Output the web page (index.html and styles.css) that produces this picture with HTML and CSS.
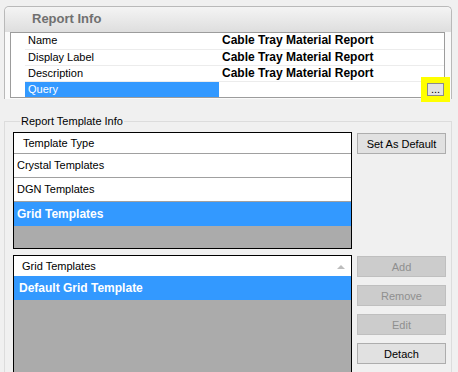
FILE: index.html
```html
<!DOCTYPE html>
<html lang="en">
<head>
    <meta charset="UTF-8">
    <title>Report Info</title>
    <link rel="stylesheet" href="styles.css">
</head>
<body>

    <div class="report-info">
        <div class="ri-head">Report Info</div>
        <div class="ri-body">
            <div class="prop-grid">
                <div class="prop-row">
                    <span class="gutter"></span>
                    <span class="prop-name">Name</span>
                    <span class="prop-value">Cable Tray Material Report</span>
                </div>
                <div class="prop-row">
                    <span class="gutter"></span>
                    <span class="prop-name">Display Label</span>
                    <span class="prop-value">Cable Tray Material Report</span>
                </div>
                <div class="prop-row">
                    <span class="gutter"></span>
                    <span class="prop-name">Description</span>
                    <span class="prop-value">Cable Tray Material Report</span>
                </div>
                <div class="prop-row selected">
                    <span class="gutter"></span>
                    <span class="prop-name">Query</span>
                    <span class="prop-value">
                        <span class="ellipsis-wrap">
                            <span class="highlight"></span>
                            <button class="ellipsis">...</button>
                        </span>
                    </span>
                </div>
            </div>
        </div>
    </div>

    <fieldset class="template-info">
        <legend>Report Template Info</legend>

        <div class="tpl-row">
            <div class="listbox type-list">
                <div class="list-head">Template Type</div>
                <div class="list-item">Crystal Templates</div>
                <div class="list-item">DGN Templates</div>
                <div class="list-item selected">Grid Templates</div>
            </div>
            <div class="tpl-buttons">
                <button class="btn">Set As Default</button>
            </div>
        </div>

        <div class="tpl-row">
            <div class="listbox grid-list">
                <div class="list-head">Grid Templates <span class="sort-arrow"></span></div>
                <div class="list-item selected">Default Grid Template</div>
            </div>
            <div class="tpl-buttons">
                <button class="btn" disabled>Add</button>
                <button class="btn" disabled>Remove</button>
                <button class="btn" disabled>Edit</button>
                <button class="btn">Detach</button>
            </div>
        </div>
    </fieldset>

</body>
</html>
```

FILE: styles.css
```css
html, body {
    height: 100%;
    overflow: hidden;
}
body {
    margin: 0;
    padding: 6px 0 0 4px;
    background-color: #f0f0f0;
    font-family: "Liberation Sans", Arial, sans-serif;
    font-size: 11px;
    color: #000000;
}

/* Report Info panel */
.report-info {
    width: 446px;
    border: 1px solid #b9b9b9;
    border-bottom: none;
    border-radius: 5px 5px 0 0;
    background-color: #fafafa;
}
.ri-head {
    height: 25px;
    line-height: 24px;
    padding-left: 27px;
    font-size: 13px;
    font-weight: bold;
    color: #707070;
    background: linear-gradient(#f4f4f4, #dedede);
    border-radius: 5px 5px 0 0;
}
.ri-body {
    padding: 0 6px 1px 5px;
}
.prop-grid {
    border: 1px solid #9c9c9c;
    background-color: #ffffff;
}
.prop-row {
    display: flex;
    height: 16px;
    line-height: 15px;
}
.prop-row + .prop-row .prop-name,
.prop-row + .prop-row .prop-value {
    border-top: 1px solid #ececec;
}
.gutter {
    width: 14px;
}
.prop-name {
    width: 194px;
    padding-left: 3px;
    box-sizing: border-box;
}
.prop-value {
    flex: 1;
    display: flex;
    padding-left: 3px;
    font-size: 12px;
    font-weight: bold;
}
.prop-row.selected .prop-value {
    justify-content: flex-end;
}
.prop-row.selected .prop-name {
    background-color: #3399ff;
    color: #ffffff;
}
.ellipsis-wrap {
    position: relative;
    margin-top: 1px;
    width: 17px;
    height: 13px;
}
.highlight {
    position: absolute;
    top: -6px;
    left: -6px;
    right: -6px;
    bottom: -6px;
    background-color: #ffff00;
}
.ellipsis {
    position: relative;
    display: block;
    width: 17px;
    height: 13px;
    margin: 0;
    padding: 0;
    border: 1px solid #8c8c8c;
    background-color: #e3e3e3;
    font-family: "Liberation Sans", Arial, sans-serif;
    font-size: 11px;
    line-height: 9px;
    color: #000000;
}

/* Report Template Info group */
.template-info {
    width: 448px;
    box-sizing: border-box;
    margin: 15px 0 0 0;
    padding: 4px 5px 0 8px;
    height: 258px;
    overflow: hidden;
    border: 1px solid #dcdcdc;
    border-bottom: none;
}
.template-info legend {
    padding: 0 1px;
    margin-left: 7px;
    font-size: 11px;
    line-height: 14px;
}
.tpl-row {
    display: flex;
    gap: 5px;
    margin-bottom: 6px;
}
.listbox {
    width: 339px;
    box-sizing: border-box;
    border: 1px solid #000000;
    background-color: #ababab;
}
.type-list {
    height: 117px;
}
.grid-list {
    height: 160px;
}
.list-head {
    position: relative;
    height: 20px;
    line-height: 20px;
    padding-left: 9px;
    font-size: 11px;
    background-color: #ffffff;
    border-bottom: 1px solid #a0a0a0;
}
.grid-list .list-head {
    border-bottom: none;
    padding-left: 8px;
}
.list-item {
    height: 23px;
    line-height: 23px;
    padding-left: 3px;
    font-size: 11px;
    background-color: #ffffff;
    border-bottom: 1px solid #a0a0a0;
}
.list-item.selected {
    height: 24px;
    line-height: 24px;
    border-bottom: none;
    background-color: #3399ff;
    color: #ffffff;
    font-size: 12px;
    font-weight: bold;
}
.grid-list .list-item.selected {
    padding-left: 5px;
}
.sort-arrow {
    position: absolute;
    right: 6px;
    top: 9px;
    border-left: 4px solid transparent;
    border-right: 4px solid transparent;
    border-bottom: 4px solid #bdbdbd;
}
.tpl-buttons {
    display: flex;
    flex-direction: column;
    gap: 8px;
    padding-top: 1px;
}
.btn {
    width: 89px;
    height: 21px;
    margin: 0;
    padding: 0;
    border: 1px solid #adadad;
    background-color: #e1e1e1;
    font-family: "Liberation Sans", Arial, sans-serif;
    font-size: 11px;
    color: #000000;
}
.btn:disabled {
    border-color: #bfbfbf;
    background-color: #cccccc;
    color: #8f8f8f;
}
```
